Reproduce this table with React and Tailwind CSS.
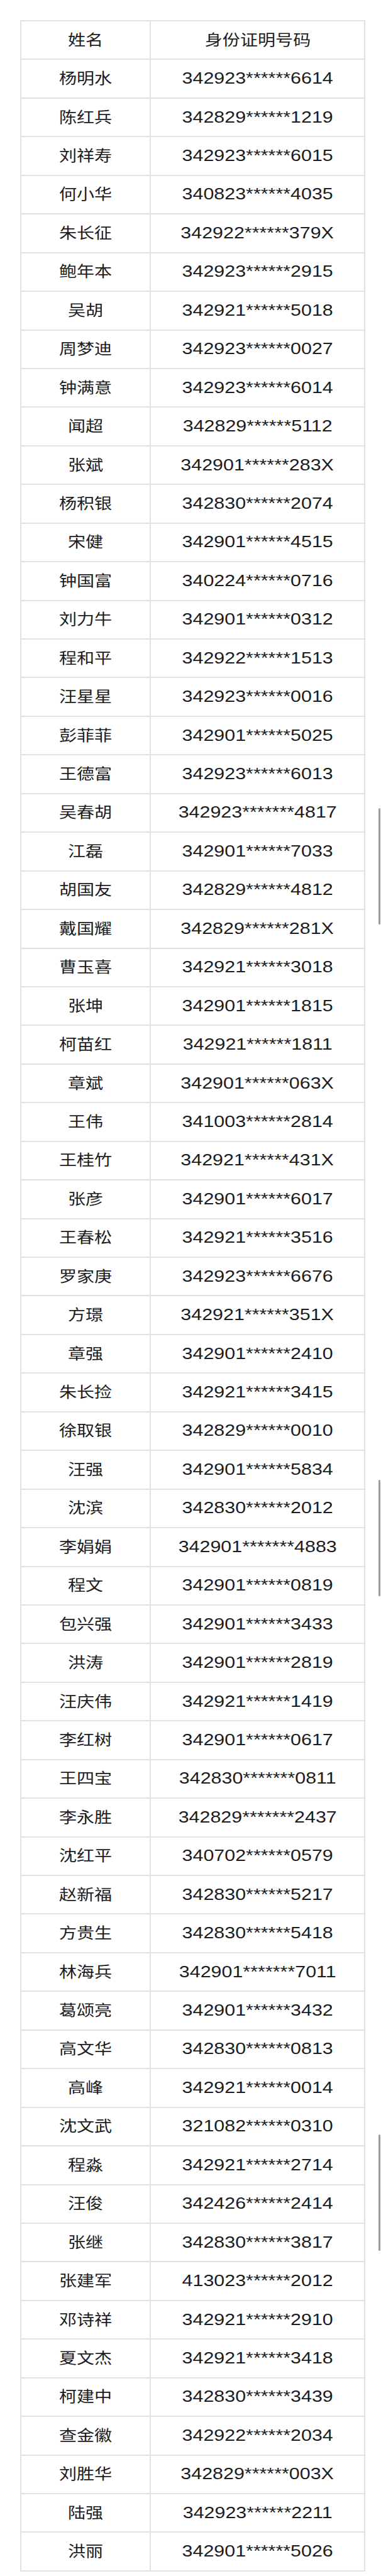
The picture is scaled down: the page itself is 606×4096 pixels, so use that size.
import React from "react";

const rows = [
  ["杨明水", "342923******6614"],
  ["陈红兵", "342829******1219"],
  ["刘祥寿", "342923******6015"],
  ["何小华", "340823******4035"],
  ["朱长征", "342922******379X"],
  ["鲍年本", "342923******2915"],
  ["吴胡", "342921******5018"],
  ["周梦迪", "342923******0027"],
  ["钟满意", "342923******6014"],
  ["闻超", "342829******5112"],
  ["张斌", "342901******283X"],
  ["杨积银", "342830******2074"],
  ["宋健", "342901******4515"],
  ["钟国富", "340224******0716"],
  ["刘力牛", "342901******0312"],
  ["程和平", "342922******1513"],
  ["汪星星", "342923******0016"],
  ["彭菲菲", "342901******5025"],
  ["王德富", "342923******6013"],
  ["吴春胡", "342923*******4817"],
  ["江磊", "342901******7033"],
  ["胡国友", "342829******4812"],
  ["戴国耀", "342829******281X"],
  ["曹玉喜", "342921******3018"],
  ["张坤", "342901******1815"],
  ["柯苗红", "342921******1811"],
  ["章斌", "342901******063X"],
  ["王伟", "341003******2814"],
  ["王桂竹", "342921******431X"],
  ["张彦", "342901******6017"],
  ["王春松", "342921******3516"],
  ["罗家庚", "342923******6676"],
  ["方璟", "342921******351X"],
  ["章强", "342901******2410"],
  ["朱长捡", "342921******3415"],
  ["徐取银", "342829******0010"],
  ["汪强", "342901******5834"],
  ["沈滨", "342830******2012"],
  ["李娟娟", "342901*******4883"],
  ["程文", "342901******0819"],
  ["包兴强", "342901******3433"],
  ["洪涛", "342901******2819"],
  ["汪庆伟", "342921******1419"],
  ["李红树", "342901******0617"],
  ["王四宝", "342830*******0811"],
  ["李永胜", "342829*******2437"],
  ["沈红平", "340702******0579"],
  ["赵新福", "342830******5217"],
  ["方贵生", "342830******5418"],
  ["林海兵", "342901*******7011"],
  ["葛颂亮", "342901******3432"],
  ["高文华", "342830******0813"],
  ["高峰", "342921******0014"],
  ["沈文武", "321082******0310"],
  ["程淼", "342921******2714"],
  ["汪俊", "342426******2414"],
  ["张继", "342830******3817"],
  ["张建军", "413023******2012"],
  ["邓诗祥", "342921******2910"],
  ["夏文杰", "342921******3418"],
  ["柯建中", "342830******3439"],
  ["查金徽", "342922******2034"],
  ["刘胜华", "342829******003X"],
  ["陆强", "342923******2211"],
  ["洪丽", "342901******5026"],
];

const cjk = "font-['Noto_Sans_CJK_SC',sans-serif]";

const Cell = ({ children, cn }) => (
  <td className="border-2 border-[#e2e2e5] p-0 text-center align-middle">
    <span className={`inline-block scale-x-[1.17] ${cn}`}>{children}</span>
  </td>
);

export default function App() {
  return (
    <div className="relative bg-white w-[606px] min-h-[4096px] pt-[32px] pl-[32px] text-[#1c1c1e]">
      <table className="border-collapse table-fixed w-[547px]">
        <colgroup>
          <col className="w-[206px]" />
          <col className="w-[341px]" />
        </colgroup>
        <tbody>
          <tr className="h-[61.45px]">
            <Cell cn={`${cjk} text-[24px] leading-none`}>姓名</Cell>
            <Cell cn={`${cjk} text-[24px] leading-none`}>身份证明号码</Cell>
          </tr>
          {rows.map(([name, id]) => (
            <tr key={name + id} className="h-[61.45px]">
              <Cell cn={`${cjk} text-[24px] leading-none`}>{name}</Cell>
              <Cell cn="font-['Liberation_Sans',Arial,sans-serif] text-[26px] leading-none scale-x-[1.2]">
                {id}
              </Cell>
            </tr>
          ))}
        </tbody>
      </table>

      {/* scroll indicators from the stitched screenshot */}
      <div className="absolute right-[1px] top-[1285px] h-[185px] w-[3px] rounded-full bg-[#9b9ba0]" />
      <div className="absolute right-[1px] top-[2353px] h-[185px] w-[3px] rounded-full bg-[#9b9ba0]" />
      <div className="absolute right-[1px] top-[3394px] h-[185px] w-[3px] rounded-full bg-[#9b9ba0]" />
    </div>
  );
}
